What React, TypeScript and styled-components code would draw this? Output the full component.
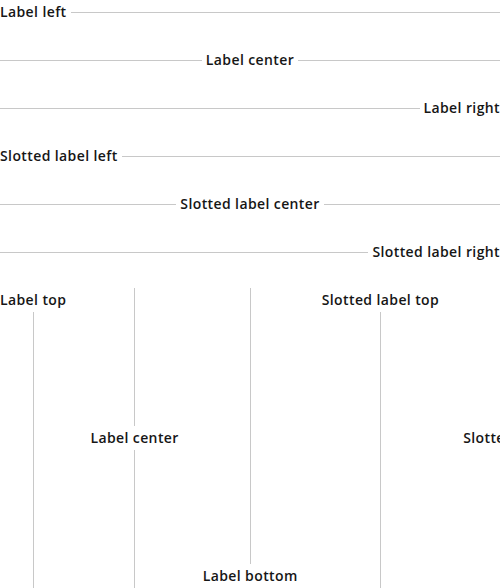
import React from "react";
import styled, { createGlobalStyle } from "styled-components";

const Global = createGlobalStyle`
  * { box-sizing: border-box; }
  body { margin: 0; background: #fff; overflow: hidden; }
`;

type Placement = "start" | "center" | "end";

const Page = styled.main`
  font: 600 14px/24px "Open Sans", sans-serif;
  letter-spacing: 0.028em;
  color: #161616;
`;

const Stack = styled.section`
  display: flex;
  flex-direction: column;
  gap: 24px;
`;

const Columns = styled.section`
  display: flex;
  gap: 24px;
  height: 300px;
  margin-top: 24px;
`;

const Divider = styled.div<{ $vertical?: boolean; $placement: Placement }>`
  display: flex;
  flex: none;
  flex-direction: ${(p) => (p.$vertical ? "column" : "row")};
  align-items: center;
  gap: ${(p) => (p.$vertical ? "0" : "4px")};
  white-space: nowrap;

  &::before,
  &::after {
    content: "";
    flex: 1;
    ${(p) => (p.$vertical ? "width: 1px;" : "height: 1px;")}
    background: #c8c8c8;
  }
  &::before { display: ${(p) => (p.$placement === "start" ? "none" : "block")}; }
  &::after { display: ${(p) => (p.$placement === "end" ? "none" : "block")}; }
`;

const rows: [string, Placement][] = [
  ["Label left", "start"],
  ["Label center", "center"],
  ["Label right", "end"],
  ["Slotted label left", "start"],
  ["Slotted label center", "center"],
  ["Slotted label right", "end"],
];

const columns: [string, Placement][] = [
  ["Label top", "start"],
  ["Label center", "center"],
  ["Label bottom", "end"],
  ["Slotted label top", "start"],
  ["Slotted label center", "center"],
  ["Slotted label bottom", "end"],
];

export default function App() {
  return (
    <Page>
      <Global />
      <Stack>
        {rows.map(([label, placement]) => (
          <Divider key={label} $placement={placement} role="separator">
            <span>{label}</span>
          </Divider>
        ))}
      </Stack>
      <Columns>
        {columns.map(([label, placement]) => (
          <Divider key={label} $vertical $placement={placement} role="separator" aria-orientation="vertical">
            <span>{label}</span>
          </Divider>
        ))}
      </Columns>
    </Page>
  );
}
